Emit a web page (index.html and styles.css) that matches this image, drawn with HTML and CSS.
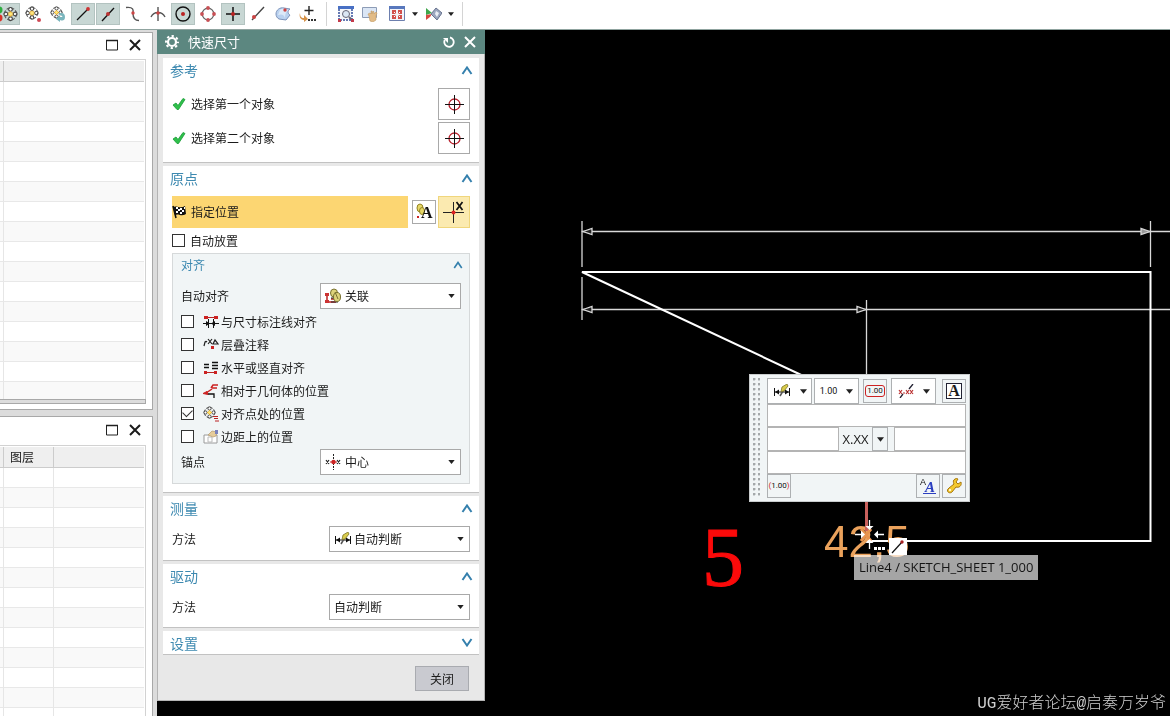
FILE: index.html
```html
<!DOCTYPE html>
<html lang="zh-CN">
<head>
<meta charset="utf-8">
<title>快速尺寸</title>
<link rel="stylesheet" href="styles.css">
</head>
<body>
<svg class="defs" aria-hidden="true">
  <symbol id="i-points" viewBox="0 0 16 16">
    <g fill="#fff" stroke="#444" stroke-width="1.2"><circle cx="8" cy="3" r="2"/><circle cx="8" cy="13" r="2"/><circle cx="3" cy="8" r="2"/><circle cx="13" cy="8" r="2"/></g>
    <circle cx="8" cy="8" r="6.400" fill="none" stroke="#555" stroke-width="1.200" stroke-dasharray="3.500 1.500"/>
    <path d="M8 5v6M5 8h6M6 6l4 4M10 6l-4 4" stroke="#e0a51c" stroke-width="1.2"/>
    <circle cx="8" cy="8" r="1.800" fill="#ffe67a"/>
  </symbol>
  <symbol id="i-target" viewBox="0 0 20 20">
    <circle cx="10.500" cy="10.500" r="5.500" fill="none" stroke="#b8202c" stroke-width="1.300"/>
    <path d="M10.500 1v19M1 10.500h19" stroke="#111" stroke-width="1"/>
  </symbol>
  <symbol id="i-check" viewBox="0 0 14 14"><path d="M1 8l3-2 2 2.500L11 1.500l2 1L6.500 12.500H5z" fill="#2fc04a" stroke="#169a35" stroke-width=".8"/></symbol>
  <symbol id="i-up" viewBox="0 0 12 9"><path d="M1.500 8L6 1.500 10.500 8" fill="none" stroke="#3580ad" stroke-width="2"/></symbol>
  <symbol id="i-down" viewBox="0 0 12 9"><path d="M1.500 1L6 7.500 10.500 1" fill="none" stroke="#3580ad" stroke-width="2"/></symbol>
  <symbol id="i-arrow" viewBox="0 0 8 5"><path d="M0 0h8L4 5z" fill="#222"/></symbol>
  <symbol id="i-close" viewBox="0 0 12 12"><path d="M1 1l10 10M11 1L1 11" stroke="currentColor" stroke-width="2"/></symbol>
  <symbol id="i-max" viewBox="0 0 12 12"><path d="M.5 1.500h11v9.500H.5z" fill="none" stroke="#222"/><path d="M0 1.500h12" stroke="#222" stroke-width="1.500"/></symbol>
  <symbol id="i-infer" viewBox="0 0 18 14">
    <path d="M1.500 4v8M16.500 4v8M1 8h16" stroke="#111" stroke-width="1"/><path d="M2 8l4-2.500v5zM16 8l-4-2.500v5z" fill="#111"/>
    <path d="M7 12l6-10" stroke="#555" stroke-width="1.500"/><path d="M9 3l5-3 1 2-4 5-3 .5z" fill="#d9cc4b" stroke="#7c7426" stroke-width=".8"/>
  </symbol>
</svg>

<header class="toolbar">
  <button class="tool tool-on" aria-label="捕捉点"><svg width="20" height="16" viewBox="0 0 20 16"><circle cx="1" cy="4" r="3.500" fill="#2eae3f"/><circle cx="1" cy="12" r="3.500" fill="#d8342a"/><use href="#i-points" x="5" width="15" height="16"/></svg></button>
  <button class="tool" aria-label="点"><svg width="16" height="16" viewBox="0 0 16 16"><use href="#i-points" width="14" height="14"/><circle cx="14" cy="14" r="2" fill="#cf4a55"/></svg></button>
  <button class="tool" aria-label="点循环"><svg width="16" height="16" viewBox="0 0 16 16"><use href="#i-points" width="13" height="13"/><path d="M8 8c4-2 7-1 7 3s-3 4-5 3v2l-4-3 4-4v2c2 0 3 0 2-1z" fill="#7ab5bd"/></svg></button>
  <button class="tool tool-on" aria-label="端点"><svg width="16" height="16" viewBox="0 0 16 16"><path d="M2 14L13 3" stroke="#111" stroke-width="1.300"/><circle cx="13" cy="3" r="1.900" fill="#c33"/></svg></button>
  <button class="tool tool-on" aria-label="中点"><svg width="16" height="16" viewBox="0 0 16 16"><path d="M2 15L14 2" stroke="#111" stroke-width="1.300"/><circle cx="8" cy="8" r="2" fill="#b33"/></svg></button>
  <button class="tool" aria-label="控制点"><svg width="16" height="16" viewBox="0 0 16 16"><path d="M1 1.500c9-1 7 4 7 6s0 7 6 7" fill="none" stroke="#555" stroke-width="1.400"/><circle cx="8" cy="7" r="1.700" fill="#c44"/></svg></button>
  <button class="tool" aria-label="交点"><svg width="16" height="16" viewBox="0 0 16 16"><path d="M8 1v14M1 11c3-6 11-6 14 0" fill="none" stroke="#555" stroke-width="1.400"/><circle cx="8" cy="7" r="1.800" fill="#c44"/></svg></button>
  <button class="tool tool-on" aria-label="圆心"><svg width="16" height="16" viewBox="0 0 16 16"><circle cx="8" cy="8" r="7" fill="none" stroke="#111" stroke-width="1.400"/><circle cx="8" cy="8" r="2" fill="#b22"/></svg></button>
  <button class="tool" aria-label="象限点"><svg width="16" height="16" viewBox="0 0 16 16"><circle cx="8" cy="8" r="5.800" fill="none" stroke="#666" stroke-width="1.300"/><g fill="#c85055"><circle cx="8" cy="2" r="1.900"/><circle cx="8" cy="14" r="1.900"/><circle cx="2" cy="8" r="1.900"/><circle cx="14" cy="8" r="1.900"/></g></svg></button>
  <button class="tool tool-on" aria-label="现有点"><svg width="16" height="16" viewBox="0 0 16 16"><path d="M8 1v14M1 8h14" stroke="#111" stroke-width="1.500"/><circle cx="8" cy="8" r="2" fill="#b22"/></svg></button>
  <button class="tool" aria-label="曲线上的点"><svg width="16" height="16" viewBox="0 0 16 16"><path d="M2 14L14 1" stroke="#444" stroke-width="1.400"/><circle cx="4" cy="11" r="2" fill="#c44"/></svg></button>
  <button class="tool" aria-label="面上的点"><svg width="16" height="16" viewBox="0 0 16 16"><path d="M1 8c0-4 4-7 8-6l6 1c-3 2-2 5 0 6l-4 5-7-1c-2-1-3-3-3-5z" fill="#b9d1ef" stroke="#7d93ba"/><path d="M5 4c2-2 6-1 8 0-2 2-3 4-3 8-1-4-4-4-7-3z" fill="#dce9f8"/><circle cx="10" cy="4" r="1.700" fill="#c44"/></svg></button>
  <button class="tool" aria-label="点构造器"><svg width="18" height="16" viewBox="0 0 18 16"><path d="M10 0v9M5.500 4.500h9" stroke="#222" stroke-width="1.400"/><path d="M1 7c0 3 1 5 4 5V9l4 4-4 3v-2c-4 0-5-4-4-7z" fill="#d59248"/><path d="M9 13h2v2H9zM12 13h2v2h-2zM15 13h2v2h-2z" fill="#333"/></svg></button>
  <span class="sep"></span>
  <span class="tool-group">
    <button class="tool" aria-label="框选"><svg width="16" height="16" viewBox="0 0 16 16"><path d="M0 0h16v3H0z" fill="#4870c4"/><path d="M1 3v11h13V3" fill="#f4f6fa" stroke="#36509c" stroke-width="1.500" stroke-dasharray="2 1"/><circle cx="8" cy="8" r="3.500" fill="#dbe7f4" stroke="#667"/><path d="M11 11l3 3" stroke="#667" stroke-width="2"/><path d="M0 13h3v3H0zM13 13h3v3h-3z" fill="#c33a4a"/></svg></button>
    <button class="tool" aria-label="平移"><svg width="16" height="16" viewBox="0 0 16 16"><path d="M.5 1.500h14v10H.5z" fill="#dbe6f5" stroke="#8d9cb6"/><path d="M7 10l-1-2 2-1 1 1V5h1v3l1-3 1 1v2l2-2 1 1-1 3v4l-3 2-3-1z" fill="#e2bb86" stroke="#c39c66" stroke-width=".6"/></svg></button>
  </span>
  <button class="tool tool-next" aria-label="适合窗口"><svg width="16" height="16" viewBox="0 0 16 16"><path d="M.5.500h15v14H.5z" fill="#f2f4fa" stroke="#6d7fae"/><path d="M0 0h16v3H0z" fill="#5878bd"/><path d="M3 4h4v4H3zM9 4h4v4H9zM3 9h4v4H3zM9 9h4v4H9z" fill="#d2504c"/><path d="M5 6l1.500 1.500M11 6L9.500 7.500M5 11l1.500-1.500M11 11L9.500 9.500" stroke="#fff"/></svg></button>
  <button class="drop" aria-label="更多窗口选项"><svg width="6" height="4"><use href="#i-arrow"/></svg></button>
  <button class="tool" aria-label="编辑截面"><svg width="17" height="14" viewBox="0 0 17 14"><path d="M1 1l6 5-6 2z" fill="#3ea64b"/><path d="M1 8l6-1-2 3-4 3z" fill="#d8463f"/><path d="M11 1l6 5-5 7-6-6z" fill="#9aa5be" stroke="#68748f"/><path d="M11 4l3 2-2 4-2-3z" fill="#e9edf4"/></svg></button>
  <button class="drop" aria-label="更多截面选项"><svg width="6" height="4"><use href="#i-arrow"/></svg></button>
  <span class="sep"></span>
</header>

<main class="workspace">
  <aside class="dock">
    <section class="pane">
      <div class="pane-bar"><button aria-label="最大化"><svg width="12" height="12"><use href="#i-max"/></svg></button><button aria-label="关闭面板"><svg width="12" height="12"><use href="#i-close"/></svg></button></div>
      <div class="grid-box">
        <table class="grid">
          <colgroup><col class="c-edge"><col></colgroup>
          <thead><tr><th></th><th></th></tr></thead>
          <tbody>
            <tr><td></td><td></td></tr><tr><td></td><td></td></tr><tr><td></td><td></td></tr><tr><td></td><td></td></tr>
            <tr><td></td><td></td></tr><tr><td></td><td></td></tr><tr><td></td><td></td></tr><tr><td></td><td></td></tr>
            <tr><td></td><td></td></tr><tr><td></td><td></td></tr><tr><td></td><td></td></tr><tr><td></td><td></td></tr>
            <tr><td></td><td></td></tr><tr><td></td><td></td></tr><tr><td></td><td></td></tr><tr class="cut"><td></td><td></td></tr>
          </tbody>
        </table>
      </div>
      <div class="scroll-strip"></div>
    </section>
    <section class="pane pane-last">
      <div class="pane-bar"><button aria-label="最大化"><svg width="12" height="12"><use href="#i-max"/></svg></button><button aria-label="关闭面板"><svg width="12" height="12"><use href="#i-close"/></svg></button></div>
      <div class="grid-box">
        <table class="grid">
          <colgroup><col class="c-edge"><col class="c-layer"><col></colgroup>
          <thead><tr><th></th><th>图层</th><th></th></tr></thead>
          <tbody>
            <tr><td></td><td></td><td></td></tr><tr><td></td><td></td><td></td></tr><tr><td></td><td></td><td></td></tr><tr><td></td><td></td><td></td></tr>
            <tr><td></td><td></td><td></td></tr><tr><td></td><td></td><td></td></tr><tr><td></td><td></td><td></td></tr><tr><td></td><td></td><td></td></tr>
            <tr><td></td><td></td><td></td></tr><tr><td></td><td></td><td></td></tr><tr><td></td><td></td><td></td></tr><tr><td></td><td></td><td></td></tr>
            <tr><td></td><td></td><td></td></tr>
          </tbody>
        </table>
      </div>
    </section>
  </aside>

  <section class="dialog" aria-labelledby="dlg-title">
    <div class="dialog-bar">
      <svg width="14" height="14" viewBox="0 0 14 14"><circle cx="7" cy="7" r="4" fill="none" stroke="#fff" stroke-width="2.200"/><circle cx="7" cy="7" r="6" fill="none" stroke="#fff" stroke-width="2" stroke-dasharray="2.300 2.412" stroke-dashoffset="1.150"/></svg>
      <h1 id="dlg-title">快速尺寸</h1>
      <button aria-label="重置"><svg width="12" height="12" viewBox="0 0 12 12"><path d="M7 1.500A4.700 4.700 0 1 1 1.800 4" fill="none" stroke="#fff" stroke-width="1.800"/><path d="M0 2h5v5z" fill="#fff"/></svg></button>
      <button aria-label="关闭对话框"><svg width="12" height="12"><use href="#i-close"/></svg></button>
    </div>
    <div class="dialog-body">
      <section class="card">
        <h2>参考 <svg width="12" height="9"><use href="#i-up"/></svg></h2>
        <div class="card-body stack">
          <div class="pick"><svg width="14" height="14"><use href="#i-check"/></svg><span>选择第一个对象</span><button class="sq" aria-label="选择第一个对象"><svg width="20" height="20"><use href="#i-target"/></svg></button></div>
          <div class="pick"><svg width="14" height="14"><use href="#i-check"/></svg><span>选择第二个对象</span><button class="sq" aria-label="选择第二个对象"><svg width="20" height="20"><use href="#i-target"/></svg></button></div>
        </div>
      </section>

      <section class="card">
        <h2>原点 <svg width="12" height="9"><use href="#i-up"/></svg></h2>
        <div class="card-body">
          <div class="origin">
            <div class="origin-active"><svg width="14" height="14" viewBox="0 0 14 14"><path d="M1 1l3 12" stroke="#111" stroke-width="1.500"/><path d="M1 2c4-2 7 2 12-1l1 8c-5 3-7-1-11 1z" fill="#111"/><path d="M4 2h2v2H4zM8 3h2v2H8zM6 4h2v2H6zM10 5h2v2h-2zM4 6h2v2H4zM8 7h2v2H8zM12 2h1v2h-1z" fill="#fff"/></svg>指定位置</div>
            <button class="sq sq-small" aria-label="注释文本"><svg width="18" height="18" viewBox="0 0 18 18"><ellipse cx="5" cy="5" rx="3" ry="4" fill="#e6d768" stroke="#938321"/><ellipse cx="7" cy="8" rx="2.500" ry="3.500" fill="#e6d768" stroke="#938321"/><path d="M2 13h2v2H2z" fill="#c22"/><text x="6" y="15" class="glyph-a">A</text></svg></button>
            <button class="sq sq-on" aria-label="点位置"><svg width="24" height="24" viewBox="0 0 24 24"><path d="M11.500 2v21M1 12.500h21" stroke="#222" stroke-width="1"/><circle cx="11.500" cy="12.500" r="2" fill="#d22"/><path d="M14.500 2l6 8M20.500 2l-6 8" stroke="#111" stroke-width="1.700"/></svg></button>
          </div>
          <label class="tick tick-out"><input type="checkbox"> 自动放置</label>
          <div class="sub">
            <h3>对齐 <svg width="10" height="8"><use href="#i-up"/></svg></h3>
            <div class="field"><label for="auto-align">自动对齐</label>
              <div class="combo has-icon"><select id="auto-align"><option>关联</option></select><svg class="combo-icon" width="18" height="16" viewBox="0 0 18 16"><path d="M2 6v7M4 14h7M6 11h6" stroke="#b22" stroke-width="1.500"/><path d="M0 5h4v3H0zM0 12h4v3H0z" fill="#c33"/><path d="M6 14h7M6 10h4" stroke="#222"/><ellipse cx="9" cy="5" rx="3.500" ry="4" fill="#ddd37b" stroke="#77702f"/><ellipse cx="12" cy="9" rx="3.500" ry="4.500" fill="#ddd37b" stroke="#77702f"/><path d="M10 4l3 7" stroke="#77702f"/></svg><svg class="combo-arrow" width="7" height="4"><use href="#i-arrow"/></svg></div>
            </div>
            <div class="ticks">
              <label class="tick"><input type="checkbox"><svg width="16" height="14" viewBox="0 0 16 14"><path d="M3 2.500h10" stroke="#b22"/><path d="M1 1h4v3H1zM11 1h4v3h-4z" fill="#c22"/><path d="M0 8.500h16M5.500 4v9M10.500 4v9" stroke="#111"/><path d="M7 8.500L3 6v5zM8 8.500L12 6v5z" fill="#111"/></svg>与尺寸标注线对齐</label>
              <label class="tick"><input type="checkbox"><svg width="16" height="14" viewBox="0 0 16 14"><path d="M1 8l1-4q1-1 2 0M5 6l4-5M5 1l4 5M10 6l2-4 3 4z" fill="none" stroke="#222" stroke-width="1.200"/><path d="M8 8h3v3H8z" fill="#c22"/></svg>层叠注释</label>
              <label class="tick"><input type="checkbox"><svg width="16" height="14" viewBox="0 0 16 14"><path d="M1 3.500h5M1 6.500h5M9 1.500h6M9 4.500h6M9 7.500h6" stroke="#111" stroke-width="1.500"/><path d="M3 11.500h9" stroke="#b22"/><path d="M1 10h3v3H1zM11 10h3v3h-3z" fill="#c22"/></svg>水平或竖直对齐</label>
              <label class="tick"><input type="checkbox"><svg width="16" height="14" viewBox="0 0 16 14"><path d="M8 4l2-3h5M9 4h5" fill="none" stroke="#c22" stroke-width="1.500"/><path d="M3 9l6-4" stroke="#c22" stroke-width="1.500"/><path d="M0 9.500l4-2 1 3z" fill="#c22" stroke="#c22"/><path d="M5 10h6v4" fill="none" stroke="#111" stroke-width="1.300"/></svg>相对于几何体的位置</label>
              <label class="tick"><input type="checkbox" checked><svg width="16" height="16" viewBox="0 0 16 16"><use href="#i-points" width="13" height="13"/><path d="M10 10.500h5M11 12.500h4M12 15h4" stroke="#b22" stroke-width="1.200"/></svg>对齐点处的位置</label>
              <label class="tick"><input type="checkbox"><svg width="16" height="14" viewBox="0 0 16 14"><path d="M1 5h13v8H1z" fill="#fff" stroke="#9a9a9a"/><path d="M5 7h4v5H5z" fill="none" stroke="#bbb"/><path d="M5 5l4-4 5 1-1 4-3 1z" fill="#e6cc9a" stroke="#b39a70" stroke-width=".7"/><path d="M12 0h3v4h-3z" fill="#7c83bd"/></svg>边距上的位置</label>
            </div>
            <div class="field"><label for="anchor">锚点</label>
              <div class="combo has-icon"><select id="anchor"><option>中心</option></select><svg class="combo-icon" width="18" height="16" viewBox="0 0 18 16"><path d="M8.500 0v16" stroke="#222" stroke-dasharray="2 1"/><path d="M1 6l3 4M4 6l-3 4M12 6l3 4M15 6l-3 4" stroke="#222" stroke-width="1.200"/><path d="M5 8h7" stroke="#b22"/><circle cx="8.500" cy="8" r="2.200" fill="#c22"/></svg><svg class="combo-arrow" width="7" height="4"><use href="#i-arrow"/></svg></div>
            </div>
          </div>
        </div>
      </section>

      <section class="card">
        <h2>测量 <svg width="12" height="9"><use href="#i-up"/></svg></h2>
        <div class="card-body"><div class="field"><label for="measure">方法</label>
          <div class="combo has-icon"><select id="measure"><option>自动判断</option></select><svg class="combo-icon" width="18" height="14"><use href="#i-infer"/></svg><svg class="combo-arrow" width="7" height="4"><use href="#i-arrow"/></svg></div></div></div>
      </section>

      <section class="card card-tight">
        <h2>驱动 <svg width="12" height="9"><use href="#i-up"/></svg></h2>
        <div class="card-body"><div class="field"><label for="drive">方法</label>
          <div class="combo"><select id="drive"><option>自动判断</option></select><svg class="combo-arrow" width="7" height="4"><use href="#i-arrow"/></svg></div></div></div>
      </section>

      <section class="card card-closed">
        <h2>设置 <svg width="12" height="9"><use href="#i-down"/></svg></h2>
      </section>
      <div class="dialog-foot"><button class="btn">关闭</button></div>
    </div>
  </section>

  <section class="canvas">
    <svg class="drawing" aria-hidden="true">
      <g transform="translate(-485 -30)">
        <g stroke="#d8d8d8" stroke-width="1.300" fill="none">
          <path d="M582 221v46M582 277v43M1150.500 221v46M866.500 300v80M582 231.500h1600M582 309.500h1600"/>
          <path d="M583 231.500l9-3v6zM583 309.500l9-3v6zM866 309.500l-9-3v6z" fill="#222"/>
          <path d="M1150 231.500l-9-3v6z" fill="#999"/>
        </g>
        <path d="M866 541h284.500V272H582l230 108" fill="none" stroke="#fff" stroke-width="2"/>
        <text x="824" y="557" class="dim">42,5</text>
        <path d="M866.500 495v36" stroke="#c9605c" stroke-width="3"/>
        <text x="702" y="586" class="five">5</text>
        <path d="M861 529l10 12M871 529l-10 12" stroke="#e8934e" stroke-width="3"/>
        <g stroke="#fff" stroke-width="1.300" fill="#fff">
          <path d="M869.500 520v9M869.500 549v-8M855 534.500h8M884 534.500h-8"/>
          <path d="M869.500 530l-4-4h8zM869.500 539l-4 4h8zM865 534.500l-4-4v8zM874 534.500l4-4v8z" stroke="none"/>
          <path d="M874 547h3v3h-3zM878 547h3v3h-3zM882 547h3v3h-3z" stroke="none"/>
        </g>
        <path d="M889 538h18v17h-18z" fill="#fff"/><path d="M892 553l10-11" stroke="#111" stroke-width="1.200"/><circle cx="902" cy="542" r="1.700" fill="#a22"/>
      </g>
    </svg>
    <div class="tip" role="tooltip"><span>Line4 / SKETCH_SHEET 1_000</span></div>

    <div class="palette">
      <div class="grip"></div>
      <div class="palette-body">
        <div class="p-row p-tools">
          <button class="cell cell-wide" aria-label="测量方法"><svg width="18" height="14"><use href="#i-infer"/></svg><svg width="7" height="5"><use href="#i-arrow"/></svg></button>
          <button class="cell cell-wide"><span class="num">1.00</span><svg width="7" height="5"><use href="#i-arrow"/></svg></button>
          <button class="cell cell-sq push"><span class="num num-frame">1.00</span></button>
          <button class="cell cell-wide push" aria-label="文本方位"><svg width="16" height="14" viewBox="0 0 16 14"><path d="M1 6l3 4M4 6l-3 4M8 6l3 4M11 6l-3 4M12 6l3 4M15 6l-3 4M5 9h2" stroke="#b33" stroke-width="1.200"/><path d="M2 14l3-4M11 5l4-5" stroke="#223" stroke-width="1.300"/></svg><svg width="7" height="5"><use href="#i-arrow"/></svg></button>
          <button class="cell cell-sq last"><span class="boxed-a">A</span></button>
        </div>
        <input class="entry" aria-label="上方附加文本">
        <div class="p-row p-mid">
          <input class="entry" aria-label="前面附加文本">
          <output class="fmt">X.XX</output>
          <button class="cell fmt-drop" aria-label="数值格式"><svg width="7" height="5"><use href="#i-arrow"/></svg></button>
          <input class="entry" aria-label="后面附加文本">
        </div>
        <input class="entry" aria-label="下方附加文本">
        <div class="p-row p-foot">
          <button class="cell cell-sq"><span class="num num-ref"><b>(</b>1.00<b>)</b></span></button>
          <button class="cell cell-sq last" aria-label="文本设置"><svg width="18" height="18" viewBox="0 0 18 18"><text x="1" y="8" class="a-small">A</text><text x="6" y="15" class="a-blue">A</text><path d="M4 16.500h13" stroke="#2b3fc0"/></svg></button>
          <button class="cell cell-sq" aria-label="设置"><svg width="16" height="16" viewBox="0 0 16 16"><path d="M9 1c2-1 3 0 3 0l-2 3 2 2 3-2c1 4-2 6-5 5l-4 5c-2 2-6 0-4-3l1-1 5-4c-1-2-1-4 1-5z" fill="#f4c92f" stroke="#a5760f"/><circle cx="4" cy="12" r="1" fill="#fff"/></svg></button>
        </div>
      </div>
    </div>
    <p class="watermark">UG爱好者论坛@启奏万岁爷</p>
  </section>
</main>
</body>
</html>
```
FILE: styles.css
```css
* { box-sizing: border-box; }
body {
  margin: 0; height: 100vh; overflow: hidden; display: flex; flex-direction: column;
  background: #000; color: #1b1b1b;
  font: 12px/16px "Noto Sans CJK SC", sans-serif;
}
button, input, select { font: inherit; color: inherit; }
button { padding: 0; border: 0; background: none; display: flex; align-items: center; justify-content: center; }
svg { display: block; flex: none; }
h1, h2, h3, p { margin: 0; font-weight: 400; }
.defs { position: absolute; width: 0; height: 0; }

/* Selection toolbar */
.toolbar { flex: none; display: flex; align-items: center; gap: 1px; height: 30px; padding-bottom: 2px; background: #fff; border-bottom: 1px solid #8fa39f; }
.tool { flex: none; width: 24px; height: 22px; border: 1px solid transparent; }
.tool:first-child { margin-left: -4px; }
.tool-on { background: #c8d7d4; border-color: #b3c3c0; }
.tool-group { display: flex; }
.tool-next { margin-left: 2px; }
.drop { flex: none; width: 10px; height: 22px; }
.sep { width: 1px; height: 24px; margin: 0 7px 0 5px; background: #d4d4d4; }
.tool-group { margin-left: 3px; }

.workspace { flex: 1; min-height: 0; display: flex; align-items: flex-start; }

/* Docked panes */
.dock { flex: none; align-self: stretch; width: 157px; padding: 2px 4px 0 0; display: flex; flex-direction: column; gap: 6px; background: #dcdcdc; overflow: hidden; }
.pane { flex: none; padding: 0 6px 5px 0; background: #fff; border: 1px solid #a8a8a8; border-left: 0; }
.pane-bar { display: flex; justify-content: flex-end; gap: 11px; height: 26px; padding: 0 5px 2px 0; }
.pane-last .pane-bar { height: 28px; }
.grid-box { border: 1px solid #d2d2d2; border-width: 1px 1px 0 0; padding: 1px 1px 0 0; }
.grid { width: 100%; table-layout: fixed; border-collapse: separate; border-spacing: 0; }
.c-edge { width: 4px; }
.c-layer { width: 50px; }
.grid th { height: 21px; padding: 0 0 0 6px; text-align: left; font-weight: 400; background: #efefef; border-bottom: 1px solid #ccc; border-right: 1px solid #ccc; }
.grid td { height: 20px; padding: 0; border-bottom: 1px solid #e8e8e8; border-right: 1px solid #e6e6e6; }
.grid th:first-child { padding: 0; }
.grid th:last-child, .grid td:last-child { border-right: 0; }
.grid tr:nth-child(even) td { background: #f9f9f9; }
.grid .cut td { height: 17px; border-bottom: 0; }
.scroll-strip { height: 5px; background: #dcdcdc; border: 1px solid #a8a8a8; border-left: 0; }

/* Dialog */
.dialog { flex: none; width: 328px; background: #e8e8e8; border: 1px solid #b4b4b4; border-top: 0; }
.dialog-bar { display: flex; align-items: center; gap: 9px; height: 24px; margin: 0 -1px; padding: 0 9px 0 8px; background: #5c8780; color: #fff; }
.dialog-bar h1 { flex: 1; font-size: 13px; line-height: 18px; }
.dialog-body { display: flex; flex-direction: column; gap: 3px; padding: 4px 5px 9px; }
.card { background: #fff; border-bottom: 1px solid #c2c2c2; padding-bottom: 8px; }
.card-tight { padding-bottom: 7px; }
.card-closed { padding-bottom: 0; }
.card h2 { display: flex; align-items: center; justify-content: space-between; height: 26px; padding: 0 6px 2px 7px; font-size: 14px; line-height: 20px; color: #3d89b0; }
.card-closed h2 { height: 23px; padding-bottom: 0; }
.card-body { padding: 4px 9px 0; }
.stack { display: flex; flex-direction: column; gap: 2px; }
.pick { display: flex; align-items: center; gap: 5px; }
.pick .sq { margin-left: auto; }
.sq { flex: none; width: 32px; height: 32px; background: #fff; border: 1px solid #a9a9a9; }
.sq-small { width: 24px; height: 24px; }
.sq-on { background: #fbeab0; border-color: #f0d67c; }
.origin { display: flex; align-items: center; gap: 2px; }
.origin-active { flex: 1; display: flex; align-items: center; gap: 5px; height: 32px; margin-right: 2px; background: #fcd672; }
.tick { display: flex; align-items: center; gap: 5px; }
.tick-out { height: 25px; }
.tick input { appearance: none; flex: none; width: 13px; height: 13px; margin: 0; background: #fff; border: 1px solid #333; display: grid; place-items: center; }
.tick input:checked::after { content: ""; width: 8px; height: 5px; margin-bottom: 3px; border: solid #333; border-width: 0 0 1px 1px; transform: rotate(-45deg); }
.sub { padding: 0 8px 8px; background: #f1f5f6; border: 1px solid #d6d9da; }
.sub h3 { display: flex; align-items: center; justify-content: space-between; height: 22px; margin-right: -2px; font-size: 12px; line-height: 16px; color: #3d89b0; }
.sub .field:first-of-type { margin-top: 7px; }
.ticks { display: flex; flex-direction: column; margin-top: 1px; margin-bottom: 1px; }
.ticks .tick { height: 23px; gap: 2px; }
.ticks .tick input { margin-right: 7px; }
.field { display: flex; align-items: center; justify-content: space-between; }
.combo { display: grid; align-items: center; width: 141px; }
.combo > * { grid-area: 1 / 1; }
.combo select { appearance: none; width: 100%; height: 26px; padding: 0 20px 0 4px; background: #fff; border: 1px solid #a9a9a9; border-radius: 0; }
.has-icon select { padding-left: 24px; }
.combo-icon { margin-left: 5px; pointer-events: none; }
.combo-arrow { justify-self: end; margin-right: 6px; pointer-events: none; }
.dialog-foot { display: flex; justify-content: flex-end; padding: 8px 10px 0 0; }
.btn { width: 54px; height: 25px; background: #c9cad0; border: 1px solid #a9abb0; }

/* Graphics area */
.canvas { position: relative; flex: 1; align-self: stretch; min-width: 0; overflow: hidden; background: #000; }
.drawing { position: absolute; inset: 0; width: 100%; height: 100%; }
.dim { font: 44px "Liberation Sans", sans-serif; fill: #eba25c; }
.five { font: 84px "Liberation Serif", serif; fill: #fb0a0a; stroke: #fb0a0a; stroke-width: 1; }
.tip { position: absolute; left: 369px; top: 525px; padding: 3px 5px 4px; white-space: nowrap; font: 13px/18px "Open Sans", sans-serif; color: #151515; }
.tip::before { content: ""; position: absolute; inset: 0; background: #a5a5a5; mix-blend-mode: screen; }
.tip span { position: relative; }
.palette { position: absolute; left: 264px; top: 344px; display: flex; width: 221px; padding: 3px; background: #f1f5f6; border: 1px solid #c9cccd; }
.grip { width: 7px; margin-right: 7px; background: radial-gradient(circle at 1px 1px, #a4a8aa 1px, transparent 2px) 0 0 / 5px 5px; }
.palette-body { flex: 1; min-width: 0; display: flex; flex-direction: column; }
.p-row { display: flex; align-items: center; }
.p-tools { height: 26px; gap: 2px; }
.cell { flex: none; background: #f1f5f6; border: 1px solid #adb0b2; }
.cell-wide { width: 45px; height: 26px; gap: 9px; background: #fff; }
.cell-sq { width: 24px; height: 24px; }
.push { margin-left: 2px; }
.last { margin-left: auto; }
.entry { width: 100%; min-width: 0; height: 24px; margin: 0; padding: 0 3px; background: #fff; border: 1px solid #b4b4b4; border-radius: 0; }
.palette-body > .entry { height: 23px; }
.p-mid { height: 24px; }
.p-mid .entry { flex: 1; }
.fmt { width: 33px; text-align: center; font: 13px/18px "Open Sans", sans-serif; }
.fmt-drop { width: 16px; height: 24px; margin-right: 6px; }
.p-foot { gap: 2px; }
.num { font: 9px/10px "Liberation Sans Narrow", Roboto, sans-serif; color: #111; }
.num b { color: #c22; font-weight: 400; }
.num-frame { padding: 0 1px; font-size: 8px; border: 1px solid #c22; border-radius: 3px; }
.num-ref { font-size: 8px; }
.boxed-a { width: 16px; height: 16px; border: 1px solid #223; background: #fff; font: bold 16px/14px "Liberation Serif", serif; }
.glyph-a { font: bold 16px "Liberation Serif", serif; fill: #111; }
.a-small { font: 9px "Liberation Sans", sans-serif; fill: #111; }
.a-blue { font: italic bold 15px "Liberation Serif", serif; fill: #2b3fc0; }
.watermark { position: absolute; right: 4px; bottom: 2px; font: 300 16px/20px "Liberation Mono", "Noto Sans CJK SC", monospace; color: #cfcfcf; white-space: nowrap; }
```
